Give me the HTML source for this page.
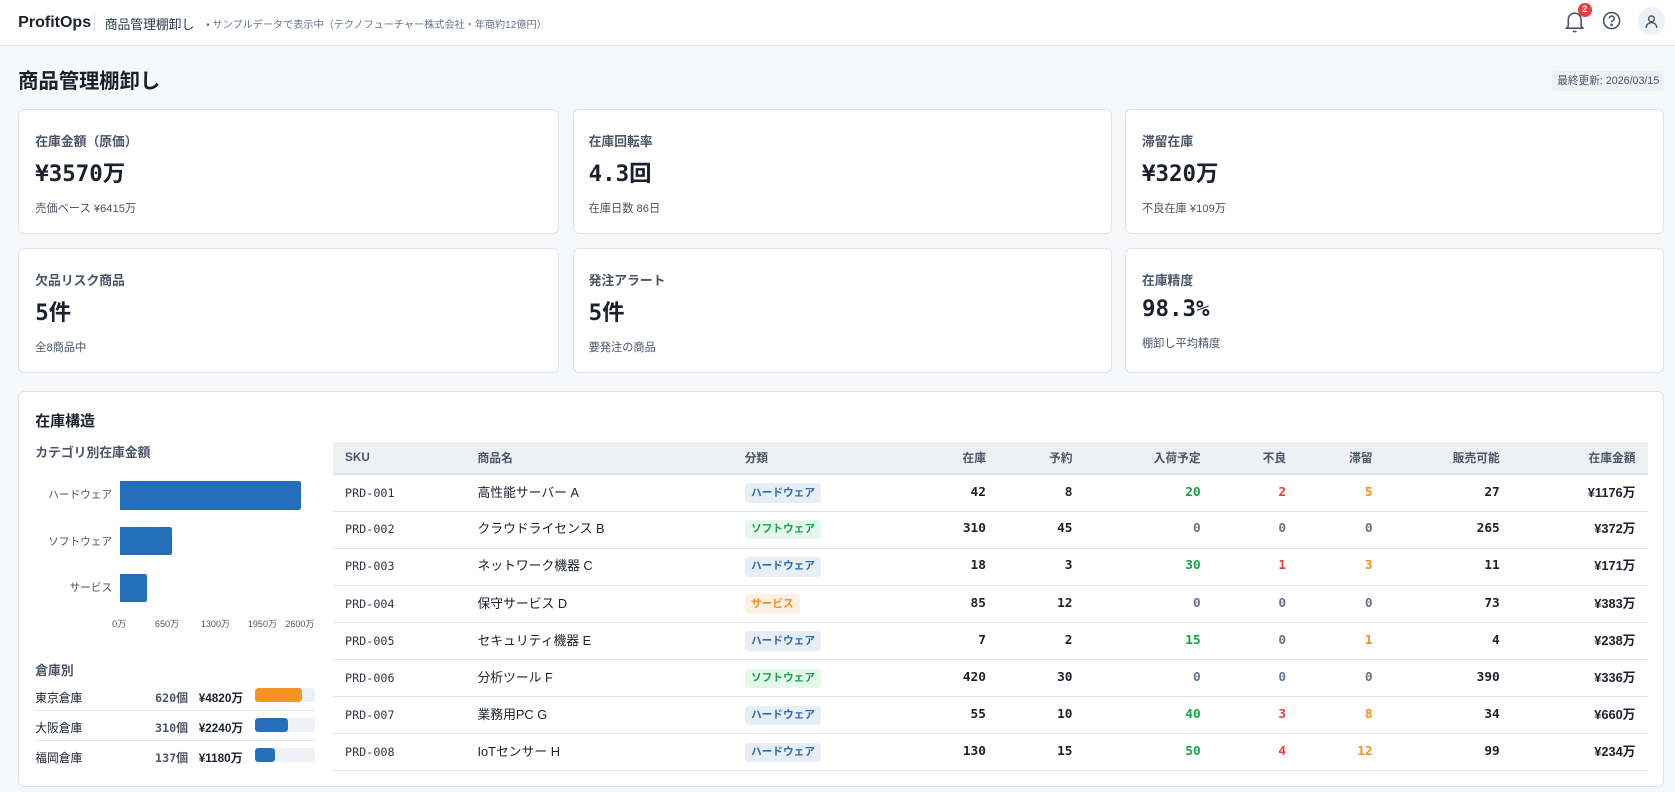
<!DOCTYPE html>
<html><head><meta charset="utf-8"><style>
html{zoom:1.06825}
*{box-sizing:border-box;margin:0;padding:0}
body{width:1568px;height:741px;background:#f6f8fa;font-family:"Liberation Sans","Noto Sans CJK JP",sans-serif;color:#1a202c;position:relative;overflow:hidden}
.a{position:absolute}
.hdr{left:0;top:0;width:1568px;height:43px;background:#fff;border-bottom:1px solid #dfe3ea}
.mono{font-family:"DejaVu Sans Mono","Noto Sans CJK JP",monospace}
.card{background:#fff;border:1px solid #dfe3ea;border-radius:6px}
.lbl{font-size:12px;color:#4a5568;font-weight:bold}
.val{font-size:21px;font-weight:bold;color:#1a202c}
.sub{font-size:10.5px;color:#4a5568}
table{border-collapse:collapse;font-size:12px}
th{background:#edf1f6;color:#4a5568;font-weight:bold;height:30px;font-size:11px;border-bottom:2px solid #dfe3ea}
td{height:34.7px;border-bottom:1px solid #e2e6ec;vertical-align:middle;line-height:14px}
.r{text-align:right}
td.n{font-family:"DejaVu Sans Mono",monospace;font-weight:bold;font-size:12px;text-align:right}
.tag{display:inline-block;font-size:10px;font-weight:bold;padding:2px 6px;border-radius:3px}
.hw{background:#e8eef7;color:#2b6cb0}.sw{background:#e6f7ec;color:#16a34a}.sv{background:#fdf1e4;color:#f08c1c}
.g{color:#16a34a!important}.rd{color:#e53e3e!important}.o{color:#f0901c!important}.z{color:#64748b!important}
</style></head><body>
<div class="a hdr"></div>
<div class="a" style="left:17px;top:12px;font-size:15px;font-weight:bold;color:#1a202c">ProfitOps</div>
<div class="a" style="left:88px;top:12px;width:1px;height:18px;background:#dfe3ea"></div>
<div class="a" style="left:98px;top:13px;font-size:12px;color:#2d3748">商品管理棚卸し</div>
<div class="a" style="left:193px;top:15px;font-size:9.5px;color:#64748b">• サンプルデータで表示中（テクノフューチャー株式会社・年商約12億円）</div>
<svg class="a" style="left:1464px;top:9px" width="20" height="22" viewBox="0 0 20 22" fill="none" stroke="#4a5568" stroke-width="1.5"><path d="M4 15V9a6 6 0 0 1 12 0v6l1.5 2h-15z"/><path d="M8.5 19.5a1.8 1.8 0 0 0 3 0"/></svg>
<div class="a" style="left:1477px;top:3px;width:13px;height:13px;border-radius:50%;background:#e53e3e;color:#fff;font-size:9px;font-weight:bold;text-align:center;line-height:13px">2</div>
<svg class="a" style="left:1500px;top:10px" width="18" height="18" viewBox="0 0 18 18" fill="none" stroke="#4a5568" stroke-width="1.5"><circle cx="9" cy="9" r="7.5"/><path d="M6.8 7a2.3 2.3 0 1 1 3 2.2c-.6.3-.8.7-.8 1.3"/><circle cx="9" cy="13" r=".5" fill="#4a5568"/></svg>
<div class="a" style="left:1533px;top:7px;width:26px;height:26px;border-radius:50%;background:#edf1f6"></div>
<svg class="a" style="left:1539px;top:13px" width="14" height="14" viewBox="0 0 14 14" fill="none" stroke="#4a5568" stroke-width="1.3"><circle cx="7" cy="4.5" r="2.7"/><path d="M2 13a5 5 0 0 1 10 0"/></svg>

<div class="a" style="left:17px;top:60px;font-size:19px;font-weight:bold">商品管理棚卸し</div>
<div class="a" style="left:1453px;top:66px;width:105px;height:19px;background:#edf1f6;border-radius:3px;font-size:10px;color:#4a5568;text-align:center;line-height:19px">最終更新: 2026/03/15</div>

<div class="a card" style="left:17px;top:102px;width:506px;height:117px"></div>
<div class="a card" style="left:536px;top:102px;width:505px;height:117px"></div>
<div class="a card" style="left:1053px;top:102px;width:505px;height:117px"></div>
<div class="a card" style="left:17px;top:232px;width:506px;height:117px"></div>
<div class="a card" style="left:536px;top:232px;width:505px;height:117px"></div>
<div class="a card" style="left:1053px;top:232px;width:505px;height:117px"></div>

<div class="a lbl" style="left:33px;top:123px">在庫金額（原価）</div>
<div class="a val mono" style="left:33px;top:146px">¥3570万</div>
<div class="a sub" style="left:33px;top:187px">売価ベース ¥6415万</div>
<div class="a lbl" style="left:551px;top:123px">在庫回転率</div>
<div class="a val mono" style="left:551px;top:146px">4.3回</div>
<div class="a sub" style="left:551px;top:187px">在庫日数 86日</div>
<div class="a lbl" style="left:1069px;top:123px">滞留在庫</div>
<div class="a val mono" style="left:1069px;top:146px">¥320万</div>
<div class="a sub" style="left:1069px;top:187px">不良在庫 ¥109万</div>
<div class="a lbl" style="left:33px;top:253px">欠品リスク商品</div>
<div class="a val mono" style="left:33px;top:276px">5件</div>
<div class="a sub" style="left:33px;top:317px">全8商品中</div>
<div class="a lbl" style="left:551px;top:253px">発注アラート</div>
<div class="a val mono" style="left:551px;top:276px">5件</div>
<div class="a sub" style="left:551px;top:317px">要発注の商品</div>
<div class="a lbl" style="left:1069px;top:253px">在庫精度</div>
<div class="a val mono" style="left:1069px;top:277px">98.3%</div>
<div class="a sub" style="left:1069px;top:314px">棚卸し平均精度</div>

<div class="a card" style="left:17px;top:366px;width:1541px;height:371px"></div>
<div class="a" style="left:33px;top:384px;font-size:14px;font-weight:bold">在庫構造</div>
<div class="a lbl" style="left:33px;top:414px">カテゴリ別在庫金額</div>
<div class="a" style="left:0;top:456px;width:105px;text-align:right;font-size:10px;color:#4a5568">ハードウェア</div>
<div class="a" style="left:0;top:500px;width:105px;text-align:right;font-size:10px;color:#4a5568">ソフトウェア</div>
<div class="a" style="left:0;top:543px;width:105px;text-align:right;font-size:10px;color:#4a5568">サービス</div>
<div class="a" style="left:112px;top:450px;width:170px;height:27px;background:#246fb9;border-radius:0 2px 2px 0"></div>
<div class="a" style="left:112px;top:493px;width:49px;height:27px;background:#246fb9;border-radius:0 2px 2px 0"></div>
<div class="a" style="left:112px;top:537px;width:26px;height:27px;background:#246fb9;border-radius:0 2px 2px 0"></div>
<div class="a" style="left:105px;top:577px;font-size:8.5px;color:#4a5568">0万</div>
<div class="a" style="left:145px;top:577px;font-size:8.5px;color:#4a5568">650万</div>
<div class="a" style="left:188px;top:577px;font-size:8.5px;color:#4a5568">1300万</div>
<div class="a" style="left:232px;top:577px;font-size:8.5px;color:#4a5568">1950万</div>
<div class="a" style="left:267px;top:577px;font-size:8.5px;color:#4a5568">2600万</div>

<div class="a lbl" style="left:33px;top:618px">倉庫別</div>
<div class="a" style="left:33px;top:645px;font-size:11px">東京倉庫</div>
<div class="a" style="left:33px;top:673px;font-size:11px">大阪倉庫</div>
<div class="a" style="left:33px;top:701px;font-size:11px">福岡倉庫</div>
<div class="a mono" style="left:120px;top:645px;width:56px;text-align:right;font-size:11px;font-weight:bold;color:#4a5568">620個</div>
<div class="a mono" style="left:120px;top:673px;width:56px;text-align:right;font-size:11px;font-weight:bold;color:#4a5568">310個</div>
<div class="a mono" style="left:120px;top:701px;width:56px;text-align:right;font-size:11px;font-weight:bold;color:#4a5568">137個</div>
<div class="a" style="left:186px;top:645px;font-size:11px;font-weight:bold">¥4820万</div>
<div class="a" style="left:186px;top:673px;font-size:11px;font-weight:bold">¥2240万</div>
<div class="a" style="left:186px;top:701px;font-size:11px;font-weight:bold">¥1180万</div>
<div class="a" style="left:33px;top:665px;width:262px;height:1px;background:#e2e6ec"></div>
<div class="a" style="left:33px;top:693px;width:262px;height:1px;background:#e2e6ec"></div>
<div class="a" style="left:239px;top:644px;width:56px;height:13px;background:#edf1f6;border-radius:3px"><div style="width:44px;height:13px;background:#f59424;border-radius:3px"></div></div>
<div class="a" style="left:239px;top:672px;width:56px;height:13px;background:#edf1f6;border-radius:3px"><div style="width:31px;height:13px;background:#246fb9;border-radius:3px"></div></div>
<div class="a" style="left:239px;top:700px;width:56px;height:13px;background:#edf1f6;border-radius:3px"><div style="width:18px;height:13px;background:#246fb9;border-radius:3px"></div></div>

<table class="a" style="left:312px;top:414px;width:1231px">
<colgroup><col style="width:135px"><col style="width:250px"><col style="width:130px"><col style="width:96px"><col style="width:81px"><col style="width:120px"><col style="width:80px"><col style="width:81px"><col style="width:119px"><col style="width:139px"></colgroup>
<tr><th style="text-align:left;padding-left:11px">SKU</th><th style="text-align:left">商品名</th><th style="text-align:left">分類</th><th class="r">在庫</th><th class="r">予約</th><th class="r">入荷予定</th><th class="r">不良</th><th class="r">滞留</th><th class="r">販売可能</th><th class="r" style="padding-right:12px">在庫金額</th></tr>
<tbody id="tb"></tbody>
</table>
<script>
var d=[["PRD-001","高性能サーバー A","hw","ハードウェア",42,8,20,2,5,27,"¥1176万"],["PRD-002","クラウドライセンス B","sw","ソフトウェア",310,45,0,0,0,265,"¥372万"],["PRD-003","ネットワーク機器 C","hw","ハードウェア",18,3,30,1,3,11,"¥171万"],["PRD-004","保守サービス D","sv","サービス",85,12,0,0,0,73,"¥383万"],["PRD-005","セキュリティ機器 E","hw","ハードウェア",7,2,15,0,1,4,"¥238万"],["PRD-006","分析ツール F","sw","ソフトウェア",420,30,0,0,0,390,"¥336万"],["PRD-007","業務用PC G","hw","ハードウェア",55,10,40,3,8,34,"¥660万"],["PRD-008","IoTセンサー H","hw","ハードウェア",130,15,50,4,12,99,"¥234万"]];
var h="";d.forEach(function(r){h+='<tr><td style="padding-left:11px;font-family:\'DejaVu Sans Mono\',monospace;font-size:11px;color:#2d3748">'+r[0]+'</td><td style="font-size:12px">'+r[1]+'</td><td><span class="tag '+r[2]+'">'+r[3]+'</span></td><td class="n">'+r[4]+'</td><td class="n">'+r[5]+'</td><td class="n '+(r[6]?'g':'z')+'">'+r[6]+'</td><td class="n '+(r[7]?'rd':'z')+'">'+r[7]+'</td><td class="n '+(r[8]?'o':'z')+'">'+r[8]+'</td><td class="n">'+r[9]+'</td><td class="n" style="padding-right:12px;font-family:\'Liberation Sans\',\'Noto Sans CJK JP\',sans-serif">'+r[10]+'</td></tr>'});
document.getElementById("tb").innerHTML=h;
</script>
</body></html>
